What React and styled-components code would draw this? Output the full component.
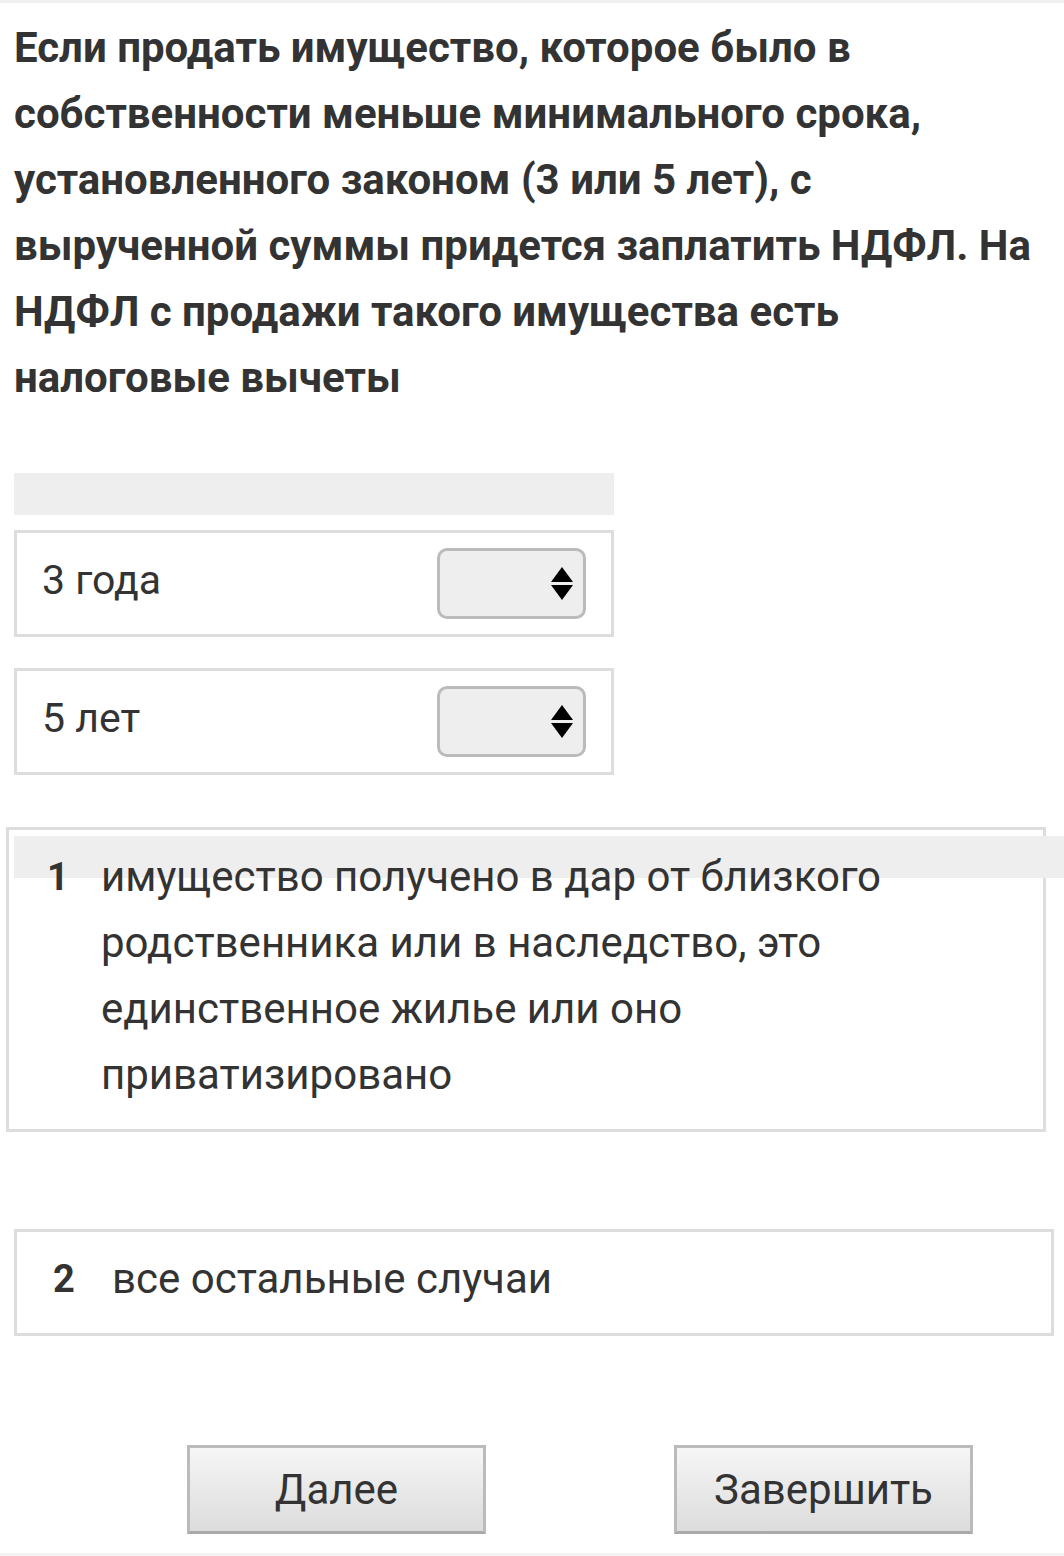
import React from 'react';
import styled, { createGlobalStyle } from 'styled-components';

const GlobalStyle = createGlobalStyle`
  html, body { margin: 0; padding: 0; background: #fff; }
  body { font-family: Roboto, "Liberation Sans", sans-serif; color: #333; }
  * { box-sizing: border-box; }
`;

const Page = styled.div`
  width: 1064px;
  min-height: 1556px;
  border-top: 3px solid #f0f0f0;
  border-bottom: 3px solid #f2f2f2;
  padding: 12px 0 0 14px;
  display: flex;
  flex-direction: column;
  overflow: hidden;
`;

const Question = styled.div`
  font-size: 42px;
  font-weight: 700;
  line-height: 66px;
  color: #333;
  width: 1046px;
`;

const Band = styled.div`
  width: 600px;
  height: 42px;
  background: #eee;
  margin-top: 62px;
`;

const MatchRow = styled.div`
  width: 600px;
  height: 107px;
  border: 3px solid #ddd;
  margin-top: ${p => p.$gap}px;
  display: flex;
  align-items: center;
  justify-content: space-between;
  padding: 0 25px 0 25px;
  font-size: 41px;
`;

const Label = styled.span`
  padding-bottom: 8px;
`;

const Select = styled.div`
  width: 149px;
  height: 71px;
  border: 3px solid #bbb;
  border-radius: 10px;
  background: #eee;
  display: flex;
  align-items: center;
  justify-content: flex-end;
  padding-right: 10px;
`;

const Answer = styled.div`
  position: relative;
  width: 1040px;
  margin-top: ${p => p.$gap}px;
  margin-left: ${p => p.$shift}px;
  border: 3px solid #ddd;
  padding: 14px 20px 21px ${p => p.$indent}px;
  display: flex;
  align-items: flex-start;
  font-size: 42px;
  line-height: 66px;
  ${p => p.$band && `
    &::before {
      content: '';
      position: absolute;
      top: 6px;
      left: 5px;
      right: -21px;
      height: 42px;
      background: #eee;
    }
  `}
`;

const Num = styled.span`
  position: relative;
  width: ${p => p.$w}px;
  flex: none;
  font-weight: 700;
  font-size: 38px;
`;

const AnswerText = styled.span`
  position: relative;
  flex: 1;
`;

const Buttons = styled.div`
  display: flex;
  gap: 188px;
  padding-left: 173px;
  margin-top: 109px;
`;

const Button = styled.button`
  width: 299px;
  height: 89px;
  border: 3px solid #bbb;
  border-bottom-color: #aaa;
  background: linear-gradient(#f6f6f6, #dcdcdc);
  font-family: Roboto, "Liberation Sans", sans-serif;
  font-size: 42px;
  color: #333;
  padding: 0;
`;

const Arrows = () => (
  <svg width="22" height="34" viewBox="0 0 22 34">
    <path d="M11 0 L22 15 L0 15 Z" fill="#000" />
    <path d="M0 18 L22 18 L11 33 Z" fill="#000" />
  </svg>
);

export default function App() {
  return (
    <>
      <GlobalStyle />
      <Page>
        <Question>
          Если продать имущество, которое было в собственности меньше минимального срока,
          установленного законом (3 или 5 лет), с вырученной суммы придется заплатить НДФЛ.
          На НДФЛ с продажи такого имущества есть налоговые вычеты
        </Question>
        <Band />
        <MatchRow $gap={15}>
          <Label>3 года</Label>
          <Select><Arrows /></Select>
        </MatchRow>
        <MatchRow $gap={31}>
          <Label>5 лет</Label>
          <Select><Arrows /></Select>
        </MatchRow>
        <Answer $gap={52} $shift={-8} $indent={38} $band>
          <Num $w={54}>1</Num>
          <AnswerText>
            имущество получено в дар от близкого родственника или в наследство, это
            единственное жилье или оно приватизировано
          </AnswerText>
        </Answer>
        <Answer $gap={97} $shift={0} $indent={36}>
          <Num $w={59}>2</Num>
          <AnswerText>все остальные случаи</AnswerText>
        </Answer>
        <Buttons>
          <Button>Далее</Button>
          <Button>Завершить</Button>
        </Buttons>
      </Page>
    </>
  );
}
